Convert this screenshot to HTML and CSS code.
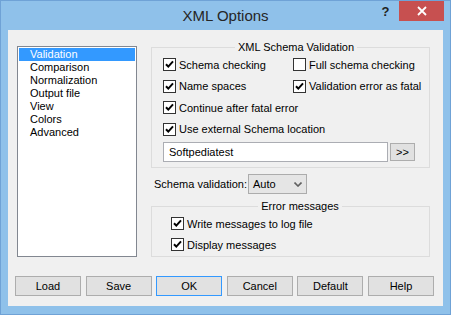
FILE: index.html
```html
<!DOCTYPE html>
<html lang="en">
<head>
    <meta charset="UTF-8">
    <title>XML Options</title>
    <link rel="stylesheet" href="styles.css">
</head>
<body>
    <div class="window">
        <div class="titlebar">
            <span class="title">XML Options</span>
            <div class="controls">
                <span class="help">?</span>
                <span class="close">
                    <svg width="10" height="10" viewBox="0 0 10 10"><path d="M1 1L9 9M9 1L1 9" stroke="#fff" stroke-width="1.8"/></svg>
                </span>
            </div>
        </div>

        <div class="client">
            <div class="main">
                <!-- Pages -->
                <ul class="list">
                    <li class="sel">Validation</li>
                    <li>Comparison</li>
                    <li>Normalization</li>
                    <li>Output file</li>
                    <li>View</li>
                    <li>Colors</li>
                    <li>Advanced</li>
                </ul>

                <div class="panel">
                    <fieldset class="group schema">
                        <legend>XML Schema Validation</legend>
                        <div class="checks">
                            <div class="check"><span class="box on"><svg viewBox="0 0 11 11"><path d="M2 5.2L4.3 7.6L9 2.4" fill="none" stroke="#000" stroke-width="2"/></svg></span>Schema checking</div>
                            <div class="check"><span class="box"></span>Full schema checking</div>
                            <div class="check"><span class="box on"><svg viewBox="0 0 11 11"><path d="M2 5.2L4.3 7.6L9 2.4" fill="none" stroke="#000" stroke-width="2"/></svg></span>Name spaces</div>
                            <div class="check"><span class="box on"><svg viewBox="0 0 11 11"><path d="M2 5.2L4.3 7.6L9 2.4" fill="none" stroke="#000" stroke-width="2"/></svg></span>Validation error as fatal</div>
                            <div class="check wide"><span class="box on"><svg viewBox="0 0 11 11"><path d="M2 5.2L4.3 7.6L9 2.4" fill="none" stroke="#000" stroke-width="2"/></svg></span>Continue after fatal error</div>
                            <div class="check wide"><span class="box on"><svg viewBox="0 0 11 11"><path d="M2 5.2L4.3 7.6L9 2.4" fill="none" stroke="#000" stroke-width="2"/></svg></span>Use external Schema location</div>
                        </div>
                        <div class="loc">
                            <input type="text" value="Softpediatest">
                            <button class="more">&gt;&gt;</button>
                        </div>
                    </fieldset>

                    <div class="schema-row">
                        <label>Schema validation:</label>
                        <div class="select">
                            <span>Auto</span>
                            <svg width="8" height="5" viewBox="0 0 8 5"><path d="M0.5 0.5L4 4L7.5 0.5" fill="none" stroke="#606060" stroke-width="1.6"/></svg>
                        </div>
                    </div>

                    <fieldset class="group errors">
                        <legend>Error messages</legend>
                        <div class="checks">
                            <div class="check"><span class="box on"><svg viewBox="0 0 11 11"><path d="M2 5.2L4.3 7.6L9 2.4" fill="none" stroke="#000" stroke-width="2"/></svg></span>Write messages to log file</div>
                            <div class="check"><span class="box on"><svg viewBox="0 0 11 11"><path d="M2 5.2L4.3 7.6L9 2.4" fill="none" stroke="#000" stroke-width="2"/></svg></span>Display messages</div>
                        </div>
                    </fieldset>
                </div>
            </div>

            <div class="buttons">
                <button>Load</button>
                <button>Save</button>
                <button class="ok">OK</button>
                <button>Cancel</button>
                <button>Default</button>
                <button>Help</button>
            </div>
        </div>
    </div>
</body>
</html>
```

FILE: styles.css
```css
* {
    box-sizing: border-box;
}
body {
    margin: 0;
    font-family: "Liberation Sans", Arial, sans-serif;
    font-size: 11px;
    color: #000;
}
.window {
    width: 451px;
    height: 315px;
    background: #8fc1ea;
    border: 1px solid #6fa2d6;
    display: flex;
    flex-direction: column;
}
.titlebar {
    height: 29px;
    display: grid;
    grid-template-columns: 1fr auto 1fr;
}
.title {
    grid-column: 2;
    font-size: 15px;
    line-height: 29px;
    color: #262626;
}
.controls {
    display: flex;
    justify-content: flex-end;
    align-items: flex-start;
    padding-right: 6px;
}
.help {
    width: 27px;
    height: 21px;
    line-height: 21px;
    text-align: center;
    font-weight: bold;
    font-size: 13px;
    color: #222;
}
.close {
    width: 45px;
    height: 20px;
    background: #c75050;
    display: flex;
    align-items: center;
    justify-content: center;
}
.client {
    flex: 1;
    margin: 0 7px 8px;
    background: #f0f0f0;
    display: flex;
    flex-direction: column;
}
.main {
    display: flex;
    gap: 14px;
    align-items: flex-start;
    margin: 16px 13px 0 9px;
}
.list {
    width: 120px;
    height: 211px;
    margin: 0;
    padding: 1px;
    list-style: none;
    background: #fff;
    border: 1px solid #828790;
}
.list li {
    line-height: 13px;
    padding-left: 11px;
}
.list .sel {
    background: #3399ff;
    color: #fff;
}
.panel {
    width: 279px;
    margin-top: -5px;
}
.group {
    margin: 0;
    min-width: 0;
    border: 1px solid #dcdcdc;
    padding: 0 0 5px 11px;
}
.group legend {
    margin: 0 auto;
    padding: 0 3px;
    line-height: 13px;
}
.checks {
    display: grid;
    grid-template-columns: 130px auto;
    grid-auto-rows: 21.5px;
}
.check {
    display: flex;
    align-items: center;
    gap: 3px;
    white-space: nowrap;
}
.check.wide {
    grid-column: 1 / -1;
}
.box {
    width: 13px;
    height: 13px;
    flex-shrink: 0;
    border: 1px solid #333;
    background: #fff;
    display: flex;
}
.box svg {
    width: 11px;
    height: 11px;
}
.loc {
    display: flex;
    align-items: center;
    gap: 2px;
    margin-top: 2px;
}
.loc input {
    width: 225px;
    height: 20px;
    margin: 0;
    padding: 0 5px;
    border: 1px solid #abadb3;
    font: 11px "Liberation Sans", Arial, sans-serif;
    color: #000;
    background: #fff;
}
button {
    margin: 0;
    padding: 0;
    font: 11px "Liberation Sans", Arial, sans-serif;
    color: #000;
    background: #e1e1e1;
    border: 1px solid #adadad;
}
.more {
    width: 25px;
    height: 18px;
}
.schema-row {
    display: flex;
    align-items: center;
    margin-top: 6px;
    padding-left: 3px;
}
.schema-row label {
    width: 94px;
}
.select {
    width: 59px;
    height: 20px;
    border: 1px solid #acacac;
    background: #e5e5e5;
    display: flex;
    align-items: center;
    justify-content: space-between;
    padding: 0 4px;
}
.errors {
    margin-top: 6px;
    padding: 0 0 1px 19px;
}
.errors .checks {
    grid-template-columns: auto;
    grid-auto-rows: 21px;
}
.buttons {
    display: flex;
    gap: 4.6px;
    margin-top: auto;
    padding: 0 0 10px 7px;
}
.buttons button {
    width: 66px;
    height: 20px;
}
.buttons .ok {
    border-color: #3399ff;
}
```
